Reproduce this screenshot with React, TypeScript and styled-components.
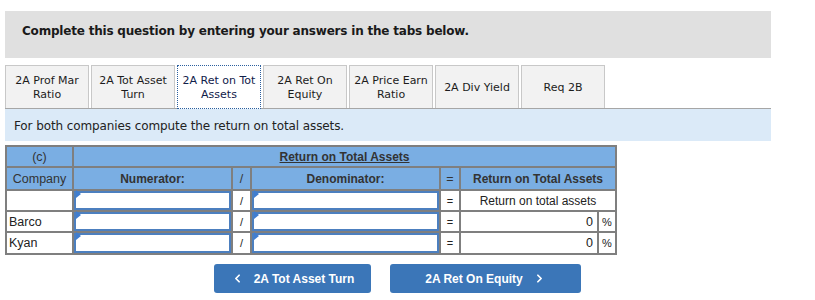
import styled, { createGlobalStyle } from "styled-components"
import { ChevronLeft, ChevronRight } from "lucide-react"

const GlobalStyle = createGlobalStyle`
	body {
		margin: 0;
		background: #fff;
		font-family: "DejaVu Sans", Verdana, sans-serif;
	}
`

const tabs = [
	"2A Prof Mar Ratio",
	"2A Tot Asset Turn",
	"2A Ret on Tot Assets",
	"2A Ret On Equity",
	"2A Price Earn Ratio",
	"2A Div Yield",
	"Req 2B",
]

const rows = [
	{ name: "", result: "Return on total assets", pct: false },
	{ name: "Barco", result: "0", pct: true },
	{ name: "Kyan", result: "0", pct: true },
]

const App = () => {
	return (
		<Page>
			<GlobalStyle />
			<Banner>Complete this question by entering your answers in the tabs below.</Banner>

			<TabBar>
				{tabs.map((t, i) => (
					<Tab key={t} $active={i === 2}>
						<span>{t}</span>
					</Tab>
				))}
			</TabBar>

			<Instruction>For both companies compute the return on total assets.</Instruction>

			<Grid>
				<colgroup>
					<col style={{ width: 67 }} />
					<col style={{ width: 159 }} />
					<col style={{ width: 19 }} />
					<col style={{ width: 189 }} />
					<col style={{ width: 20 }} />
					<col style={{ width: 138 }} />
					<col style={{ width: 18 }} />
				</colgroup>
				<tbody>
					<HeadRow $h={21}>
						<HeadCell>(c)</HeadCell>
						<HeadCell colSpan={6} $bold>
							<u>Return on Total Assets</u>
						</HeadCell>
					</HeadRow>
					<HeadRow $h={23}>
						<HeadCell>Company</HeadCell>
						<HeadCell $bold>Numerator:</HeadCell>
						<HeadCell>/</HeadCell>
						<HeadCell $bold>Denominator:</HeadCell>
						<HeadCell>=</HeadCell>
						<HeadCell colSpan={2} $bold>
							Return on Total Assets
						</HeadCell>
					</HeadRow>
					{rows.map((r, i) => (
						<BodyRow key={i} $h={i === 2 ? 22 : 21}>
							<NameCell>{r.name}</NameCell>
							<InputCell>
								<Field />
							</InputCell>
							<SignCell>/</SignCell>
							<InputCell>
								<Field />
							</InputCell>
							<SignCell>=</SignCell>
							{r.pct ? (
								<>
									<ValueCell>{r.result}</ValueCell>
									<SignCell>%</SignCell>
								</>
							) : (
								<LabelCell colSpan={2}>{r.result}</LabelCell>
							)}
						</BodyRow>
					))}
				</tbody>
			</Grid>

			<Nav>
				<NavButton $w={157}>
					<ChevronLeft size={13} strokeWidth={3.2} />
					<span>2A Tot Asset Turn</span>
				</NavButton>
				<NavButton $w={191}>
					<span>2A Ret On Equity</span>
					<ChevronRight size={13} strokeWidth={3.2} />
				</NavButton>
			</Nav>
		</Page>
	)
}

export default App

const Page = styled.div`
	width: 766px;
	padding: 11px 0 0 5px;
`

const Banner = styled.div`
	height: 47px;
	box-sizing: border-box;
	background: #e0e0e0;
	padding: 12px 0 0 17px;
	font-size: 12px;
	letter-spacing: -0.2px;
	line-height: 16px;
	font-weight: bold;
	color: #1a1a1a;
`

const TabBar = styled.div`
	display: flex;
	gap: 2px;
	margin-top: 7px;
	height: 43px;
	border-bottom: 1px solid #a6a6a6;
`

const Tab = styled.div<{ $active?: boolean }>`
	width: 84px;
	height: 43px;
	box-sizing: border-box;
	display: flex;
	align-items: center;
	justify-content: center;
	padding-top: 2px;
	text-align: center;
	font-size: 11px;
	line-height: 14px;
	color: #1c1c1c;
	background: ${(p) => (p.$active ? "#fff" : "#f2f2f2")};
	border: ${(p) => (p.$active ? "1px dotted #2b5f9e" : "1px solid #c8c8c8")};
	border-bottom: ${(p) => (p.$active ? "1px dotted #2b5f9e" : "none")};
	${(p) => p.$active && "height: 44px; margin-bottom: -1px; color: #10204a;"}
	span {
		padding: 0 3px;
	}
`

const Instruction = styled.div`
	height: 32px;
	box-sizing: border-box;
	background: #dbeaf8;
	padding: 9px 0 0 9px;
	font-size: 12px;
	letter-spacing: -0.1px;
	line-height: 16px;
	color: #222;
`

const Grid = styled.table`
	margin-top: 4px;
	width: 610px;
	table-layout: fixed;
	border-collapse: collapse;
	border: 2px solid #7f7f7f;
	font-family: "Liberation Sans", Arial, sans-serif;
	font-size: 12px;
	line-height: 14px;
	color: #222;
	td {
		border: 2px solid #7f7f7f;
		padding: 0;
	}
`

const HeadRow = styled.tr<{ $h: number }>`
	height: ${(p) => p.$h}px;
	background: #7aaee3;
`

const HeadCell = styled.td<{ $bold?: boolean }>`
	text-align: center;
	color: #333;
	font-weight: ${(p) => (p.$bold ? "bold" : "normal")};
	font-size: ${(p) => (p.$bold ? "12px" : "12.5px")};
`

const BodyRow = styled.tr<{ $h: number }>`
	height: ${(p) => p.$h}px;
	background: #fff;
`

const NameCell = styled.td`
	padding-left: 2px !important;
	font-size: 12.5px;
`

const InputCell = styled.td`
	position: relative;
`

const Field = styled.div`
	position: absolute;
	inset: 0;
	border: 2px solid #4c7fbf;
	background: #fff;
	&::before {
		content: "";
		position: absolute;
		left: 0;
		top: 0;
		border-top: 4px solid transparent;
		border-bottom: 4px solid transparent;
		border-left: 5px solid #3f7dd0;
		transform: translateY(-3px);
	}
`

const SignCell = styled.td`
	text-align: center;
	font-size: 11px;
`

const ValueCell = styled.td`
	text-align: right;
	padding-right: 4px !important;
	font-size: 12.5px;
`

const LabelCell = styled.td`
	text-align: center;
	font-size: 12px;
`

const Nav = styled.div`
	display: flex;
	gap: 19px;
	margin-top: 9px;
	padding-left: 209px;
`

const NavButton = styled.button<{ $w: number }>`
	width: ${(p) => p.$w}px;
	height: 29px;
	display: flex;
	align-items: center;
	justify-content: center;
	gap: 10px;
	border: none;
	border-radius: 3px;
	background: #3b76b8;
	color: #fff;
	font-family: "Liberation Sans", Arial, sans-serif;
	font-size: 12px;
	font-weight: bold;
	cursor: pointer;
`
